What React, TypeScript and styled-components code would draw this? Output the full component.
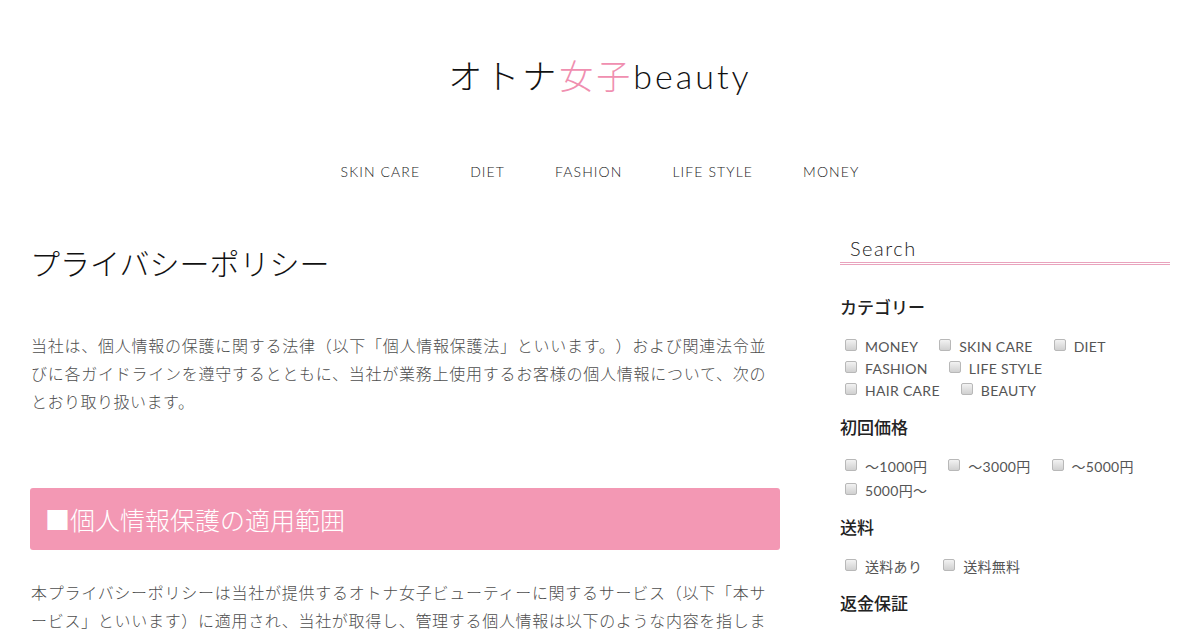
import React from "react";
import styled, { createGlobalStyle } from "styled-components";

const pink = "#f398b4";
const jp = "'Noto Sans CJK JP', sans-serif";
const latin = "'Lato', 'Noto Sans CJK JP', sans-serif";

const GlobalStyle = createGlobalStyle`
  body {
    margin: 0;
    background: #fff;
    font-family: ${jp};
    color: #555;
  }
`;

const Header = styled.header`
  padding-top: 52px;
  text-align: center;
`;

const Logo = styled.h1`
  margin: 0;
  font-family: ${latin};
  font-weight: 300;
  font-size: 34px;
  line-height: 48px;
  letter-spacing: 3px;
  color: #111;
`;

const LogoAccent = styled.span`
  color: #f08fb0;
`;

const Nav = styled.nav`
  margin-top: 62px;
  display: flex;
  justify-content: center;
  gap: 50px;
`;

const NavItem = styled.a`
  font-family: ${latin};
  font-weight: 300;
  font-size: 14px;
  line-height: 20px;
  letter-spacing: 1.1px;
  color: #222;
  text-decoration: none;
`;

const Body = styled.div`
  display: flex;
  padding: 52px 30px 0;
  gap: 60px;
`;

const Main = styled.main`
  width: 750px;
  flex-shrink: 0;
  padding-top: 8px;
`;

const Title = styled.h2`
  margin: 0;
  font-weight: 300;
  font-size: 30px;
  line-height: 40px;
  color: #111;
`;

const Paragraph = styled.p<{ $top: number }>`
  margin: ${({ $top }) => $top}px 0 0;
  width: 735px;
  font-size: 16px;
  line-height: 28px;
  letter-spacing: 0.5px;
  font-weight: 300;
  text-align: justify;
  text-spacing-trim: space-all;
  color: #4e4e4e;
  padding-left: 1px;
`;

const SectionHeading = styled.h3`
  margin: 73px 0 0;
  height: 62px;
  display: flex;
  align-items: center;
  padding-left: 15px;
  background: ${pink};
  border-radius: 3px;
  color: #fff;
  font-weight: 300;
  font-size: 25px;
`;

const Sidebar = styled.aside`
  width: 330px;
  flex-shrink: 0;
`;

const SearchInput = styled.input`
  display: block;
  box-sizing: border-box;
  width: 100%;
  height: 31px;
  border: none;
  border-bottom: 3px double #e9a3bd;
  padding: 0 10px;
  font-family: ${latin};
  font-weight: 300;
  font-size: 20px;
  letter-spacing: 1.5px;
  color: #222;
  outline: none;
  &::placeholder {
    color: #222;
  }
`;

const Group = styled.div`
  margin-top: 30px;
  & + & {
    margin-top: 13px;
  }
`;

const GroupTitle = styled.h4`
  margin: 0 0 17px;
  font-size: 17px;
  line-height: 24px;
  font-weight: 500;
  color: #222;
`;

const Options = styled.div<{ $rowGap: number }>`
  display: flex;
  flex-wrap: wrap;
  column-gap: 16px;
  row-gap: ${({ $rowGap }) => $rowGap}px;
  max-width: 300px;
`;

const Option = styled.label`
  display: flex;
  align-items: center;
  font-family: ${latin};
  font-size: 14px;
  line-height: 22px;
  letter-spacing: 0.3px;
  color: #555;
`;

const Check = styled.input`
  appearance: none;
  width: 12px;
  height: 12px;
  margin: 0 8px 0 5px;
  border: 1px solid #b8b8b8;
  border-radius: 2px;
  background: linear-gradient(#f2f2f2, #d0d0d0);
  position: relative;
  top: -2px;
`;

const groups = [
  {
    title: "カテゴリー",
    rowGap: 0,
    options: ["MONEY", "SKIN CARE", "DIET", "FASHION", "LIFE STYLE", "HAIR CARE", "BEAUTY"],
  },
  { title: "初回価格", rowGap: 2, options: ["～1000円", "～3000円", "～5000円", "5000円～"] },
  { title: "送料", rowGap: 0, options: ["送料あり", "送料無料"] },
  { title: "返金保証", rowGap: 0, options: [] as string[] },
];

const navItems = ["SKIN CARE", "DIET", "FASHION", "LIFE STYLE", "MONEY"];

const App = () => (
  <>
    <GlobalStyle />
    <Header>
      <Logo>
        オトナ<LogoAccent>女子</LogoAccent>beauty
      </Logo>
      <Nav>
        {navItems.map((n) => (
          <NavItem key={n} href="#">
            {n}
          </NavItem>
        ))}
      </Nav>
    </Header>
    <Body>
      <Main>
        <Title>プライバシーポリシー</Title>
        <Paragraph $top={49}>
          当社は、個人情報の保護に関する法律（以下「個人情報保護法」といいます。）および関連法令並びに各ガイドラインを遵守するとともに、当社が業務上使用するお客様の個人情報について、次のとおり取り扱います。
        </Paragraph>
        <SectionHeading>■個人情報保護の適用範囲</SectionHeading>
        <Paragraph $top={28}>
          本プライバシーポリシーは当社が提供するオトナ女子ビューティーに関するサービス（以下「本サービス」といいます）に適用され、当社が取得し、管理する個人情報は以下のような内容を指します。
        </Paragraph>
      </Main>
      <Sidebar>
        <SearchInput placeholder="Search" />
        {groups.map((g) => (
          <Group key={g.title}>
            <GroupTitle>{g.title}</GroupTitle>
            {g.options.length > 0 && (
              <Options $rowGap={g.rowGap}>
                {g.options.map((o) => (
                  <Option key={o}>
                    <Check type="checkbox" />
                    {o}
                  </Option>
                ))}
              </Options>
            )}
          </Group>
        ))}
      </Sidebar>
    </Body>
  </>
);

export default App;
